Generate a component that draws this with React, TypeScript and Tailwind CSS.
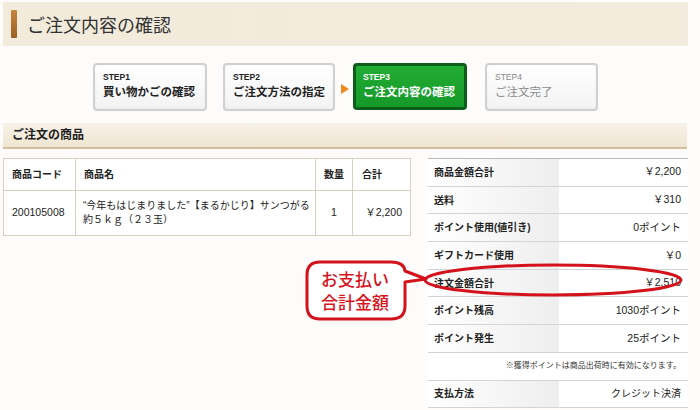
import React from 'react';

type Step = { no: string; label: string; state: 'done' | 'current' | 'todo' };

const steps: Step[] = [
  { no: 'STEP1', label: '買い物かごの確認', state: 'done' },
  { no: 'STEP2', label: 'ご注文方法の指定', state: 'done' },
  { no: 'STEP3', label: 'ご注文内容の確認', state: 'current' },
  { no: 'STEP4', label: 'ご注文完了', state: 'todo' },
];

const summary: { label: string; value: string }[] = [
  { label: '商品金額合計', value: '￥2,200' },
  { label: '送料', value: '￥310' },
  { label: 'ポイント使用(値引き)', value: '0ポイント' },
  { label: 'ギフトカード使用', value: '￥0' },
  { label: '注文金額合計', value: '￥2,510' },
  { label: 'ポイント残高', value: '1030ポイント' },
  { label: 'ポイント発生', value: '25ポイント' },
];

function StepBox({ step, width }: { step: Step; width: string }) {
  if (step.state === 'current') {
    return (
      <div className={`${width} h-[47px] rounded-[4px] border-[3px] border-[#0d5e18] bg-gradient-to-b from-[#22ad34] to-[#16982a] px-[7px] pt-[5px] text-white`}>
        <div className="text-[8.5px] font-bold leading-[12px]">{step.no}</div>
        <div className="text-[11.5px] font-bold leading-[18px]">{step.label}</div>
      </div>
    );
  }
  const todo = step.state === 'todo';
  return (
    <div className={`${width} h-[48px] rounded-[4px] border-2 border-[#d0d0d0] bg-gradient-to-b from-white to-[#f3f3f3] px-[8px] pt-[6px] shadow-[inset_0_0_2px_rgba(0,0,0,0.08)]`}>
      <div className={`text-[8.5px] leading-[12px] ${todo ? 'text-[#8a8a8a]' : 'font-bold text-[#222]'}`}>{step.no}</div>
      <div className={`text-[11.5px] leading-[18px] ${todo ? 'text-[#8a8a8a]' : 'font-bold text-[#222]'}`}>{step.label}</div>
    </div>
  );
}

export default function App() {
  return (
    <div className="relative w-[700px] h-[410px] overflow-hidden bg-[#fdfcfa] text-[#333] font-['Liberation_Sans','Noto_Sans_CJK_JP',sans-serif]">
      {/* page title */}
      <div className="mt-[2px] ml-[3px] w-[685px] h-[44px] flex items-center bg-gradient-to-r from-[#f2ebdc] to-[#f3ecdc]">
        <div className="ml-[8px] w-[6px] h-[28px] bg-gradient-to-b from-[#c8873c] to-[#9a5f25] rounded-[1px]" />
        <h1 className="ml-[10px] text-[18px] leading-none text-[#333] font-['Noto_Sans_CJK_JP',sans-serif] font-normal">ご注文内容の確認</h1>
      </div>

      {/* steps */}
      <div className="mt-[17px] h-[48px] flex items-start pl-[93px]">
        <StepBox step={steps[0]} width="w-[114px]" />
        <div className="ml-[16px]">
          <StepBox step={steps[1]} width="w-[112px]" />
        </div>
        <div className="ml-[6px] mt-[21px] w-0 h-0 border-y-[5px] border-y-transparent border-l-[8px] border-l-[#f0891d]" />
        <div className="ml-[4px]">
          <StepBox step={steps[2]} width="w-[114px]" />
        </div>
        <div className="ml-[18px]">
          <StepBox step={steps[3]} width="w-[113px]" />
        </div>
      </div>

      {/* section bar */}
      <div className="mt-[12px] ml-[3px] w-[684px] h-[26px] flex items-center border-b-2 border-[#d3bf9e] bg-gradient-to-b from-[#f7f2e8] to-[#efe5d1]">
        <h2 className="pl-[9px] text-[12px] font-bold text-[#222]">ご注文の商品</h2>
      </div>

      <div className="mt-[9px] flex items-start">
        {/* items */}
        <table className="ml-[3px] w-[407px] border-collapse bg-white text-[10px] text-[#222] table-fixed">
          <colgroup>
            <col className="w-[72px]" />
            <col className="w-[240px]" />
            <col className="w-[37px]" />
            <col className="w-[58px]" />
          </colgroup>
          <thead>
            <tr className="h-[32px]">
              <th className="border border-[#d8d0c3] px-[8px] text-left font-bold">商品コード</th>
              <th className="border border-[#d8d0c3] px-[8px] text-left font-bold">商品名</th>
              <th className="border border-[#d8d0c3] px-[8px] text-left font-bold">数量</th>
              <th className="border border-[#d8d0c3] px-[9px] text-left font-bold">合計</th>
            </tr>
          </thead>
          <tbody>
            <tr className="h-[45px]">
              <td className="border border-[#d8d0c3] px-[8px] text-[10.5px]">200105008</td>
              <td className="border border-[#d8d0c3] px-[7px] leading-[14px] whitespace-nowrap">
                “今年もはじまりました”【まるかじり】サンつがる
                <br />
                約５ｋｇ（２３玉）
              </td>
              <td className="border border-[#d8d0c3] text-center text-[10.5px]">1</td>
              <td className="border border-[#d8d0c3] pr-[8px] text-right text-[10.5px]">￥2,200</td>
            </tr>
          </tbody>
        </table>

        {/* totals */}
        <div className="ml-[17px] w-[260px] border-t border-[#b9b9b9] text-[10px] text-[#222]">
          {summary.map((row) => (
            <div key={row.label} className="h-[27.7px] flex border-b border-[#d4d4d4]">
              <div className="w-[131px] flex items-center pl-[6px] font-bold bg-gradient-to-r from-white to-[#eeeeee]">{row.label}</div>
              <div className="flex-1 flex items-center justify-end pr-[7px] bg-white text-[10.5px]">{row.value}</div>
            </div>
          ))}
          <div className="h-[27.7px] flex items-center justify-end pr-[7px] border-b border-[#d4d4d4] bg-white text-[8px] text-[#333]">
            ※獲得ポイントは商品出荷時に有効になります。
          </div>
          <div className="h-[27.7px] flex border-b border-[#d4d4d4]">
            <div className="w-[131px] flex items-center pl-[6px] font-bold bg-gradient-to-r from-white to-[#eeeeee]">支払方法</div>
            <div className="flex-1 flex items-center justify-end pr-[7px] bg-white">クレジット決済</div>
          </div>
        </div>
      </div>

      {/* annotation */}
      <svg className="absolute left-[300px] top-[255px]" width="400" height="72" viewBox="0 0 400 72" fill="none">
        <ellipse cx="253" cy="25" rx="128" ry="15" stroke="#d3121c" strokeWidth="3" />
        <path
          d="M20 7 H91 Q104 7 105 16 L126 24 L105 27 V51 Q105 64 91 64 H20 Q7 64 7 51 V20 Q7 7 20 7 Z"
          fill="white"
          stroke="#d3121c"
          strokeWidth="3"
          strokeLinejoin="round"
        />
      </svg>
      <div className="absolute left-[321px] top-[267px] text-[17px] font-medium text-[#d7141d] font-['Noto_Sans_CJK_JP',sans-serif]">
        <div className="leading-[23px]">お支払い</div>
        <div className="leading-[23px]">合計金額</div>
      </div>
    </div>
  );
}
